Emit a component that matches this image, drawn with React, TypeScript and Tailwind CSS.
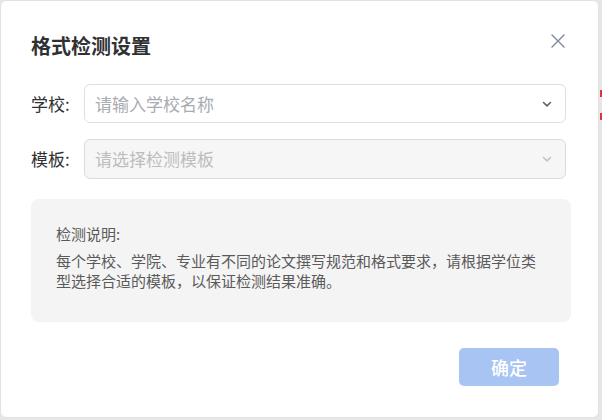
import React from "react";

const font = { fontFamily: '"Noto Sans CJK SC", "Noto Sans", sans-serif' };

function Chevron({ color }: { color: string }) {
  return (
    <svg width="10" height="10" viewBox="0 0 10 10" fill="none">
      <path d="M1.5 3.5 L5 6.8 L8.5 3.5" stroke={color} strokeWidth="1.6" strokeLinecap="round" strokeLinejoin="round" />
    </svg>
  );
}

export default function App() {
  return (
    <div className="relative w-[602px] h-[420px] bg-[#e6e6e6] overflow-hidden" style={font}>
      <div className="absolute left-[600px] top-[90px] w-[2px] h-[7px] bg-[#d9363e]" />
      <div className="absolute left-[600px] top-[113px] w-[2px] h-[7px] bg-[#d9363e]" />
      <div className="w-[599px] h-[418px] bg-white rounded-[6px] border border-[#e2e2e2] pl-[30px] pt-[31px] flex flex-col">
        <div className="flex items-center justify-between h-[28px] pr-[33px]">
          <div className="text-[20px] font-bold text-[#303133] leading-[28px]">格式检测设置</div>
          <svg width="14" height="14" viewBox="0 0 14 14" fill="none" className="mt-[-10px]">
            <path d="M1 1 L13 13 M13 1 L1 13" stroke="#7f8899" strokeWidth="1.4" strokeLinecap="round" />
          </svg>
        </div>

        <div className="mt-[24px] flex items-center">
          <div className="w-[53px] text-[17px] text-[#303133] leading-[24px]">学校:</div>
          <div className="w-[482px] h-[39px] border border-[#dcdfe6] rounded-[6px] flex items-center justify-between pl-[10px] pr-[13px]">
            <span className="text-[17px] text-[#a8abb2] leading-[24px]">请输入学校名称</span>
            <Chevron color="#606266" />
          </div>
        </div>

        <div className="mt-[16px] flex items-center">
          <div className="w-[53px] text-[17px] text-[#303133] leading-[24px]">模板:</div>
          <div className="w-[482px] h-[40px] border border-[#dcdcdc] bg-[#f6f6f6] rounded-[6px] flex items-center justify-between pl-[10px] pr-[13px]">
            <span className="text-[17px] text-[#bdbdbd] leading-[24px]">请选择检测模板</span>
            <Chevron color="#c0c4cc" />
          </div>
        </div>

        <div className="mt-[20px] w-[540px] rounded-[8px] bg-[#f4f4f4] pt-[25px] pb-[31px] px-[25px]">
          <div className="text-[15px] leading-[20px] text-[#5a5a5a]">检测说明:</div>
          <div className="mt-[7px] text-[15px] leading-[20px] text-[#5a5a5a]">
            每个学校、学院、专业有不同的论文撰写规范和格式要求，请根据学位类型选择合适的模板，以保证检测结果准确。
          </div>
        </div>

        <div className="mt-[26px] flex justify-end pr-[39px]">
          <div className="w-[100px] h-[38px] rounded-[5px] bg-[#a7c4f3] flex items-center justify-center text-white text-[18px] font-medium">
            确定
          </div>
        </div>
      </div>
    </div>
  );
}
